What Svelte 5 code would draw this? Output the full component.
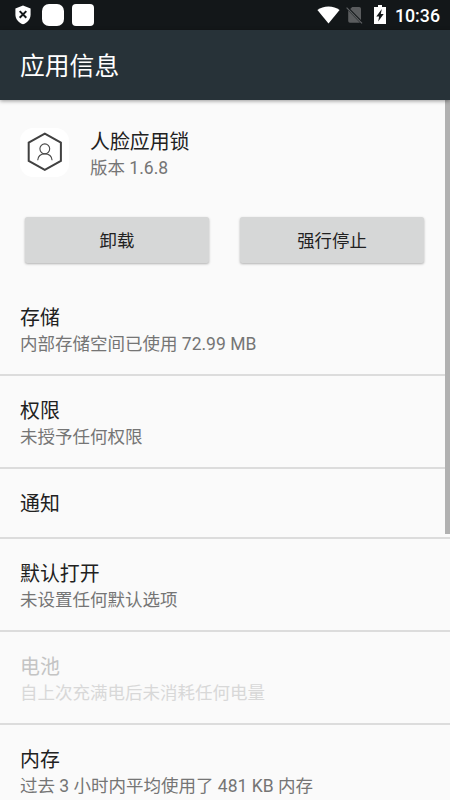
<script lang="ts">
  type Item = { title: string; summary?: string; disabled?: boolean };

  const app = { name: '人脸应用锁', version: '版本 1.6.8' };

  const actions = ['卸载', '强行停止'];

  const items: Item[] = [
    { title: '存储', summary: '内部存储空间已使用 72.99 MB' },
    { title: '权限', summary: '未授予任何权限' },
    { title: '通知' },
    { title: '默认打开', summary: '未设置任何默认选项' },
    { title: '电池', summary: '自上次充满电后未消耗任何电量', disabled: true },
    { title: '内存', summary: '过去 3 小时内平均使用了 481 KB 内存' },
  ];
</script>

<div class="screen">
  <div class="status">
    <svg class="shield" width="16" height="20" viewBox="0 0 16 20" aria-hidden="true">
      <path d="M8 .5 15.6 3.5V9.5C15.6 14 12.4 17.9 8 19.3 3.6 17.9.4 14 .4 9.5V3.5Z" fill="#fff" />
      <path d="M4.7 6.1 11.3 12.7M11.3 6.1 4.7 12.7" stroke="#131719" stroke-width="2" />
    </svg>
    <span class="blob"></span>
    <span class="blob square"></span>
    <span class="spacer"></span>
    <svg class="wifi" width="23" height="18" viewBox="0 0 23 18" aria-hidden="true">
      <path d="M.4 4.1C3.4 1.7 7.2.4 11.5.4s8.1 1.3 11.1 3.7L11.5 17.6Z" fill="#fff" />
    </svg>
    <svg class="sim" width="17" height="18" viewBox="0 0 17 18" aria-hidden="true">
      <path d="M6.2 1H13.2Q15 1 15 2.8V14L4.2 2.9ZM2.2 4.6 14 16.8H4Q2.2 16.8 2.2 15Z" fill="#5a5c5e" />
      <path d="M.6 1.6 16 17.3" stroke="#606365" stroke-width="1.2" />
    </svg>
    <svg class="battery" width="12" height="19" viewBox="0 0 12 19" aria-hidden="true">
      <path d="M4 0H8V2H12V19H0V2H4Z" fill="#fff" />
      <path d="M7.8 3.9 2.3 11.4H5.1L4.2 16.4 9.7 8.9H6.8Z" fill="#131719" />
    </svg>
    <span class="clock">10:36</span>
  </div>

  <header>
    <h1>应用信息</h1>
  </header>

  <main>
    <section class="app">
      <svg width="49" height="49" viewBox="0 0 49 49" aria-hidden="true">
        <rect width="49" height="49" rx="13" fill="#fff" />
        <path d="M24.8 5.6 40.9 14.7V32.8L24.8 41.9 8.7 32.8V14.7Z" fill="none" stroke="#414141" stroke-width="2" />
        <circle cx="24.8" cy="20.8" r="4.9" fill="none" stroke="#484848" stroke-width="1.1" />
        <path d="M17.7 32.3C18.1 28.2 21 25.9 24.8 25.9S31.7 28.2 32.1 32.3" fill="none" stroke="#484848" stroke-width="1.1" />
      </svg>
      <div class="info">
        <div class="title">{app.name}</div>
        <div class="summary">{app.version}</div>
      </div>
    </section>

    <div class="actions">
      {#each actions as label}
        <button type="button">{label}</button>
      {/each}
    </div>

    {#each items as item}
      <div class="row" class:single={!item.summary} class:disabled={item.disabled}>
        <div class="title">{item.title}</div>
        {#if item.summary}
          <div class="summary">{item.summary}</div>
        {/if}
      </div>
    {/each}
    <span class="scrollbar"></span>
  </main>
</div>

<style>
  :global(body) {
    overflow: hidden;
  }

  .screen {
    display: flex;
    flex-direction: column;
    width: 450px;
    height: 800px;
    overflow: hidden;
    background: #fafafa;
    color: #212121;
    font-family: Roboto, 'Noto Sans CJK SC', sans-serif;
  }

  .status {
    display: flex;
    flex: none;
    align-items: center;
    box-sizing: border-box;
    height: 30px;
    padding: 0 10px 0 14.5px;
    background: #131719;
  }

  .blob {
    width: 22px;
    height: 22px;
    margin-left: 11px;
    border-radius: 7px;
    background: #fff;
  }

  .blob.square {
    margin-left: 8px;
    border-radius: 4px;
  }

  .spacer {
    flex: 1;
  }

  .sim {
    margin-left: 6px;
  }

  .battery {
    margin: 0 0 1px 11px;
  }

  .clock {
    margin-left: 9px;
    padding-top: 1px;
    color: #fff;
    font-size: 17.8px;
    font-weight: 500;
    line-height: 29px;
  }

  header {
    display: flex;
    flex: none;
    align-items: center;
    box-sizing: border-box;
    height: 70px;
    padding: 3px 0 0 20px;
    background: #273238;
    box-shadow: 0 1px 4px rgba(0, 0, 0, 0.4);
    z-index: 1;
  }

  h1 {
    margin: 0;
    color: #fff;
    font-size: 24.8px;
    font-weight: 400;
    line-height: 36px;
  }

  main {
    position: relative;
    flex: 1;
    min-height: 0;
    overflow: hidden;
  }

  .app {
    display: flex;
    align-items: flex-start;
    gap: 21px;
    padding: 28px 20px 0;
  }

  .info {
    padding-top: 1px;
  }

  .title {
    font-size: 19.9px;
    line-height: 28px;
    white-space: nowrap;
  }

  .summary {
    margin-top: -2px;
    color: #757575;
    font-size: 17.5px;
    line-height: 26px;
    white-space: nowrap;
  }

  .actions {
    display: flex;
    gap: 31px;
    padding: 36px 26px 19.5px 25px;
  }

  button {
    flex: 1;
    height: 46px;
    padding: 1px 0 0;
    border: 0;
    border-radius: 2.5px;
    background: #d6d7d7;
    box-shadow: 0 1px 2.5px rgba(0, 0, 0, 0.3);
    color: #212121;
    font-family: inherit;
    font-size: 17.4px;
    font-weight: 400;
    line-height: 26px;
  }

  .row {
    box-sizing: border-box;
    height: 93.2px;
    padding: 22px 20px 0;
    border-bottom: 2px solid #dcdcdc;
  }

  .row.single {
    height: 69.8px;
    padding-top: 22.6px;
  }

  .row.disabled .title {
    color: #c4c4c4;
  }

  .row.disabled .summary {
    color: #d8d8d8;
  }

  .scrollbar {
    position: absolute;
    top: 0;
    right: 0;
    width: 5px;
    height: 434px;
    background: #b1b1b1;
  }
</style>
